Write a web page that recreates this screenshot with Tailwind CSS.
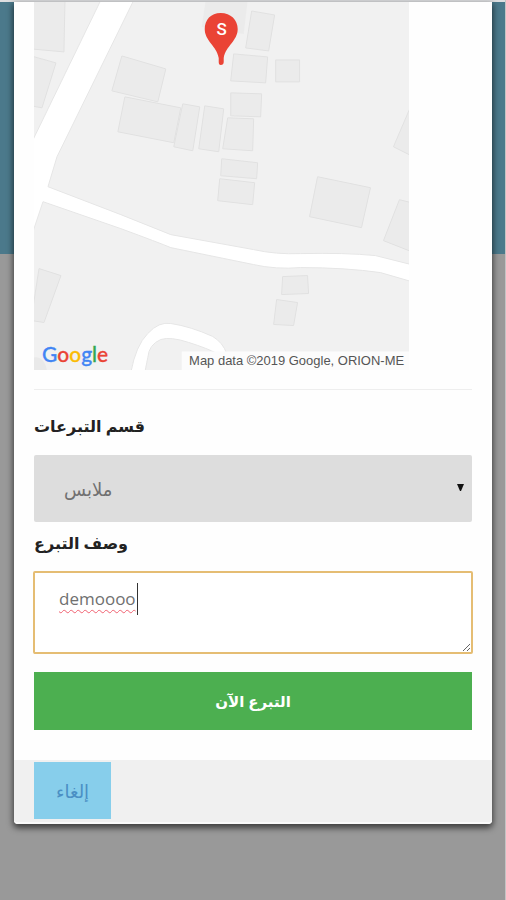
<!DOCTYPE html>
<html lang="ar">
<head>
    <meta charset="UTF-8">
    <meta name="viewport" content="width=device-width, initial-scale=1.0">
    <title>التبرع الآن</title>
    <script src="https://cdn.jsdelivr.net/npm/@tailwindcss/browser@4"></script>
</head>
<body class="min-h-screen bg-[#999999] border-r border-[#c4c4c4] font-['Open_Sans','DejaVu_Sans',sans-serif] text-[#222222]">
    <!-- Page header behind the dialog -->
    <div class="absolute inset-x-0 top-0 -z-10 h-[254px] bg-[#4b798b] border-r border-[#9cb8d0]"></div>
    <div class="h-[2px] bg-[#dedfe1]"></div>

    <!-- Donation dialog -->
    <main class="ml-[14px] mr-[13px] bg-[#fefefe] rounded-b-sm shadow-[0_3px_6px_1px_rgba(0,0,0,0.6)]">
        <form class="px-5">
            <!-- Map -->
            <svg class="block w-6/7 max-w-[376px]" viewBox="33 2 376 369" role="img" aria-label="Map">
                <rect x="33" y="2" width="376" height="369" fill="#f1f1f1"/>
                <!-- Buildings -->
                <g fill="#ebebeb" stroke="#e1e1e1" stroke-width="1">
                    <path d="M30 0H64L63 52L30 49Z"/>
                    <path d="M30 56L55 63L41 108L30 106Z"/>
                    <path d="M205 0H247L243 34L201 27Z" stroke="none"/>
                    <path d="M251 11L274 15L268 51L245 48Z"/>
                    <path d="M233 54L267 57L265 83L230 81Z"/>
                    <path d="M275 60H299V82H275Z"/>
                    <path d="M121 56L165 69L157 102L111 91Z"/>
                    <path d="M124 97L180 108L173 143L117 132Z"/>
                    <path d="M182 104L199 107L192 151L173 147Z"/>
                    <path d="M204 106L223 109L218 152L198 149Z"/>
                    <path d="M230 93L261 94L260 117L230 116Z"/>
                    <path d="M227 118L253 119L252 151L222 149Z"/>
                    <path d="M221 159L257 163L256 179L220 176Z"/>
                    <path d="M219 179L254 183L252 205L217 201Z"/>
                    <path d="M317 177L370 188L361 228L309 217Z"/>
                    <path d="M411 105L393 147L411 156Z"/>
                    <path d="M411 203L399 200L383 241L411 252Z"/>
                    <path d="M282 277L307 276L308 294L281 295Z"/>
                    <path d="M276 300L297 303L293 326L273 325Z"/>
                    <path d="M38 269L60 276L43 323L30 321Z"/>
                </g>
                <path d="M33 358C39 357 44 361 46 371H33Z" fill="#e9e9e9"/>
                <!-- Roads -->
                <g fill="#ffffff" stroke="#e6e6e6" stroke-width="1">
                    <path d="M100 0L32 140V232L42 202L120 229Q158 243 170 248L253 265Q275 270 300 268Q345 268 380 273L411 282V265L375 256Q345 253 300 254Q275 255 253 250L170 235L120 215L47 187L56 157L133 0Z"/>
                    <path d="M130 373Q135 346 147 334Q158 322 170 324Q190 327 212 337Q222 343 226 354L216 354Q207 349 188 343Q170 337 160 340Q148 345 147 358L144 373Z"/>
                </g>
                <!-- Map attribution -->
                <rect x="181" y="352" width="228" height="19" fill="#fcfcfc"/>
                <text x="296" y="366" text-anchor="middle" font-size="13" fill="#555555" class="font-['Liberation_Sans',sans-serif]">Map data ©2019 Google, ORION-ME</text>
                <text x="41" y="363" font-size="21" stroke-width="0.3" class="font-['Lato',sans-serif] font-medium"><tspan fill="#4285f4" stroke="#4285f4">G</tspan><tspan fill="#ea4335" stroke="#ea4335">o</tspan><tspan fill="#fbbc05" stroke="#fbbc05">o</tspan><tspan fill="#4285f4" stroke="#4285f4">g</tspan><tspan fill="#34a853" stroke="#34a853">l</tspan><tspan fill="#ea4335" stroke="#ea4335">e</tspan></text>
                <!-- Marker -->
                <path d="M220 13C210 13 204 20 204 29C204 41 216 46 218 58V62Q218 65 220 65Q223 65 223 62V58C225 46 237 41 237 29C237 20 230 13 220 13Z" fill="#ea4335"/>
                <text x="221" y="35" text-anchor="middle" font-size="17" font-weight="500" fill="#ffffff" class="font-['Roboto',sans-serif]">S</text>
            </svg>

            <hr class="mt-[19px] mb-5 border-[#eeeeee]">

            <label for="category" class="block w-fit text-base leading-8 font-bold">قسم التبرعات</label>
            <div class="relative mt-[13px]">
                <select id="category" class="block w-full h-[67px] appearance-none rounded-xs bg-[#dddddd] px-[30px] text-lg text-[#707070]">
                    <option>ملابس</option>
                </select>
                <svg class="pointer-events-none absolute right-2 top-[29px] h-2 w-2" viewBox="0 0 8 8"><path d="M1 0H8L5 7H4Z" fill="#111111"/></svg>
            </div>

            <label for="description" class="mt-[5px] block w-fit text-base leading-8 font-bold">وصف التبرع</label>
            <div class="relative -mx-px mt-3">
                <textarea id="description" spellcheck="false" class="block h-[83px] w-full rounded-xs border-2 border-[#e5bd73] bg-white px-6 py-3 text-[17px] leading-7 text-[#707070] underline decoration-[#f06070] decoration-wavy decoration-1 underline-offset-4 outline-none">demoooo</textarea>
                <span class="absolute left-[104px] top-3 h-8 w-px bg-[#333333]"></span>
            </div>

            <button type="submit" class="mt-[18px] mb-[30px] block h-[58px] w-full bg-[#4caf50] text-[15px] font-bold text-white">التبرع الآن</button>
        </form>

        <footer class="rounded-b-sm border-b-2 border-[#fafafa] bg-[#f0f0f0] px-5 pt-[2px] pb-[3px]">
            <button type="button" class="block h-[57px] bg-[#87ceeb] px-[22px] text-lg text-[#4a8fc4]">إلغاء</button>
        </footer>
    </main>
</body>
</html>
